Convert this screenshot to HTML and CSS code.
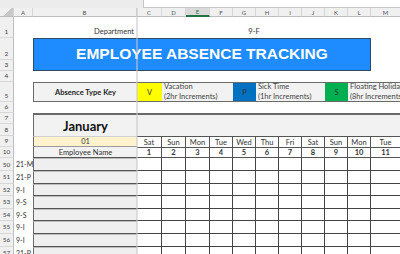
FILE: index.html
```html
<!DOCTYPE html>
<html lang="en">
<head>
    <meta charset="UTF-8">
    <title>Employee Absence Tracking</title>
    <link rel="stylesheet" href="styles.css">
</head>
<body>
    <div class="topbar"><div class="formula"></div></div>

    <div class="sheet">
        <!-- column headers -->
        <div class="colhdr corner"></div>
        <div class="colhdr">A</div>
        <div class="colhdr">B</div>
        <div class="colhdr">C</div>
        <div class="colhdr">D</div>
        <div class="colhdr sel">E</div>
        <div class="colhdr">F</div>
        <div class="colhdr">G</div>
        <div class="colhdr">H</div>
        <div class="colhdr">I</div>
        <div class="colhdr">J</div>
        <div class="colhdr">K</div>
        <div class="colhdr">L</div>
        <div class="colhdr">M</div>

        <!-- row 1 -->
        <div class="rh">1</div>
        <div></div>
        <div class="dept">Department</div>
        <div class="dept-val">9-F</div>
        <div></div>

        <!-- rows 2-3 -->
        <div class="rh">2</div>
        <div></div>
        <div class="banner">EMPLOYEE ABSENCE TRACKING</div>
        <div></div>
        <div class="rh">3</div>
        <div></div>
        <div></div>

        <!-- row 4 -->
        <div class="rh">4</div>
        <div class="blank-row"></div>

        <!-- row 5: key -->
        <div class="rh">5</div>
        <div></div>
        <div class="key key-title">Absence Type Key</div>
        <div class="key swatch vac">V</div>
        <div class="key key-text span3">Vacation<br>(2hr Increments)</div>
        <div class="key swatch sick">P</div>
        <div class="key key-text span3">Sick Time<br>(1hr Increments)</div>
        <div class="key swatch float">S</div>
        <div class="key key-text span2">Floating Holiday<br>(8hr Increments)</div>

        <!-- row 6 -->
        <div class="rh">6</div>
        <div class="blank-row"></div>

        <!-- rows 7-8 -->
        <div class="rh">7</div>
        <div></div>
        <div class="month">January</div>
        <div class="month-band"></div>
        <div class="rh">8</div>
        <div></div>

        <!-- row 9 -->
        <div class="rh">9</div>
        <div></div>
        <div class="month-no">01</div>
        <div class="day">Sat</div>
        <div class="day">Sun</div>
        <div class="day">Mon</div>
        <div class="day">Tue</div>
        <div class="day">Wed</div>
        <div class="day">Thu</div>
        <div class="day">Fri</div>
        <div class="day">Sat</div>
        <div class="day">Sun</div>
        <div class="day">Mon</div>
        <div class="day">Tue</div>

        <!-- row 10 -->
        <div class="rh">10</div>
        <div></div>
        <div class="name-hdr">Employee Name</div>
        <div class="day num">1</div>
        <div class="day num">2</div>
        <div class="day num">3</div>
        <div class="day num">4</div>
        <div class="day num">5</div>
        <div class="day num">6</div>
        <div class="day num">7</div>
        <div class="day num">8</div>
        <div class="day num">9</div>
        <div class="day num">10</div>
        <div class="day num">11</div>

        <!-- employee rows -->
        <div class="rh">50</div><div class="code">21-M</div><div class="emp"></div>
        <div class="g"></div><div class="g"></div><div class="g"></div><div class="g"></div><div class="g"></div><div class="g"></div><div class="g"></div><div class="g"></div><div class="g"></div><div class="g"></div><div class="g"></div>

        <div class="rh">51</div><div class="code">21-P</div><div class="emp"></div>
        <div class="g"></div><div class="g"></div><div class="g"></div><div class="g"></div><div class="g"></div><div class="g"></div><div class="g"></div><div class="g"></div><div class="g"></div><div class="g"></div><div class="g"></div>

        <div class="rh">52</div><div class="code">9-I</div><div class="emp"></div>
        <div class="g"></div><div class="g"></div><div class="g"></div><div class="g"></div><div class="g"></div><div class="g"></div><div class="g"></div><div class="g"></div><div class="g"></div><div class="g"></div><div class="g"></div>

        <div class="rh">53</div><div class="code">9-S</div><div class="emp"></div>
        <div class="g"></div><div class="g"></div><div class="g"></div><div class="g"></div><div class="g"></div><div class="g"></div><div class="g"></div><div class="g"></div><div class="g"></div><div class="g"></div><div class="g"></div>

        <div class="rh">54</div><div class="code">9-S</div><div class="emp"></div>
        <div class="g"></div><div class="g"></div><div class="g"></div><div class="g"></div><div class="g"></div><div class="g"></div><div class="g"></div><div class="g"></div><div class="g"></div><div class="g"></div><div class="g"></div>

        <div class="rh">55</div><div class="code">9-I</div><div class="emp"></div>
        <div class="g"></div><div class="g"></div><div class="g"></div><div class="g"></div><div class="g"></div><div class="g"></div><div class="g"></div><div class="g"></div><div class="g"></div><div class="g"></div><div class="g"></div>

        <div class="rh">56</div><div class="code">9-I</div><div class="emp"></div>
        <div class="g"></div><div class="g"></div><div class="g"></div><div class="g"></div><div class="g"></div><div class="g"></div><div class="g"></div><div class="g"></div><div class="g"></div><div class="g"></div><div class="g"></div>

        <div class="rh">57</div><div class="code">21-P</div><div class="emp"></div>
        <div class="g"></div><div class="g"></div><div class="g"></div><div class="g"></div><div class="g"></div><div class="g"></div><div class="g"></div><div class="g"></div><div class="g"></div><div class="g"></div><div class="g"></div>

        <!-- frozen pane divider -->
        <div class="freeze"></div>
    </div>
</body>
</html>
```

FILE: styles.css
```css
body {
    margin: 0;
    width: 400px;
    height: 254px;
    overflow: hidden;
    background-color: white;
    font-family: Lato, "Liberation Sans", sans-serif;
    font-size: 7.5px;
    color: #222;
}
.topbar {
    height: 8px;
    background-color: #ececec;
    display: flex;
}
.topbar .formula {
    margin-left: 143px;
    flex: 1;
    background-color: white;
    border-left: 1px solid #c6c6c6;
    border-bottom: 1px solid #c6c6c6;
}
.sheet {
    position: relative;
    display: grid;
    grid-template-columns: 14px 19px 104px 25px 24px 24px 23px 23px 23px 23px 23px 23px 23px 30px;
    grid-template-rows: 9px 21px 22px 11px 11px 20px 11px 11px 12px 11px 11px 13px repeat(7, 12.6px);
}
.sheet > div {
    box-sizing: border-box;
    min-width: 0;
}
.colhdr {
    background-color: #f0f0f0;
    border-right: 1px solid #d6d6d6;
    border-bottom: 1px solid #bdbdbd;
    color: #555;
    font-size: 6px;
    display: flex;
    align-items: center;
    justify-content: center;
}
.colhdr.sel {
    background-color: #dadada;
    color: #217346;
    border-bottom: 2px solid #217346;
}
.corner {
    background: linear-gradient(135deg, #f0f0f0 55%, #c8c8c8 55%);
}
.rh {
    background-color: #f0f0f0;
    border-right: 1px solid #bdbdbd;
    border-bottom: 1px solid #d8d8d8;
    color: #444;
    font-size: 6.5px;
    display: flex;
    align-items: flex-end;
    justify-content: center;
    line-height: 1;
    padding-bottom: 2px;
}
.dept {
    display: flex;
    align-items: flex-end;
    justify-content: flex-end;
    padding: 0 3px 2px 0;
    color: #333;
}
.dept-val {
    grid-column: span 10;
    display: flex;
    align-items: flex-end;
    justify-content: center;
    padding-bottom: 2px;
    color: #333;
}
.banner {
    grid-column: span 11;
    grid-row: span 2;
    background-color: #1e8bff;
    border: 1px solid #2d4a66;
    color: white;
    font-family: "Liberation Sans", Arial, sans-serif;
    font-weight: bold;
    font-size: 15.5px;
    display: flex;
    align-items: center;
    justify-content: center;
    padding-bottom: 2px;
}
.blank-row {
    grid-column: span 13;
}
.key {
    border-top: 1px solid #6a6a6a;
    border-bottom: 1px solid #6a6a6a;
    display: flex;
    align-items: center;
}
.key-title {
    border-left: 1px solid #6a6a6a;
    background-color: #f2f2f2;
    font-weight: bold;
    justify-content: center;
}
.swatch {
    justify-content: center;
    color: #333;
}
.vac {
    background-color: #ffff00;
}
.sick {
    background-color: #0070c0;
}
.float {
    background-color: #00b050;
}
.key-text {
    background-color: #f2f2f2;
    color: #444;
    line-height: 1.3;
    padding-left: 2px;
    white-space: nowrap;
    overflow: hidden;
}
.span3 {
    grid-column: span 3;
}
.span2 {
    grid-column: span 2;
}
.month {
    grid-row: span 2;
    background-color: #f2f2f2;
    border-top: 2px solid #6a6a6a;
    border-left: 1px solid #6a6a6a;
    font-weight: bold;
    font-size: 13px;
    color: #111;
    display: flex;
    align-items: center;
    justify-content: center;
}
.month-band {
    grid-column: span 11;
    grid-row: span 2;
    background-color: #f2f2f2;
    border-top: 2px solid #6a6a6a;
}
.month-no {
    background-color: #fff2cc;
    border-left: 1px solid #6a6a6a;
    border-top: 1px solid #cfcfcf;
    border-bottom: 1px solid #9a9a9a;
    display: flex;
    align-items: center;
    justify-content: center;
    color: #333;
}
.name-hdr {
    background-color: #f2f2f2;
    border-left: 1px solid #6a6a6a;
    border-bottom: 1px solid #555;
    display: flex;
    align-items: center;
    justify-content: center;
    color: #333;
}
.day {
    border-top: 1px solid #555;
    border-right: 1px solid #555;
    display: flex;
    align-items: center;
    justify-content: center;
    color: #333;
}
.day.num {
    font-weight: bold;
    border-bottom: 1px solid #555;
}
.code {
    font-size: 7px;
    color: #333;
    padding: 2px 0 0 2px;
    white-space: nowrap;
    position: relative;
    z-index: 1;
}
.emp {
    background-color: #efefef;
    border-left: 1px solid #6a6a6a;
    border-bottom: 1px solid #555;
    border-top: 1px solid #bdbdbd;
}
.g {
    border-right: 1px solid #444;
    border-bottom: 1px solid #444;
}
.freeze {
    position: absolute;
    left: 136px;
    top: 0;
    bottom: 0;
    width: 2px;
    background-color: rgba(200, 200, 200, 0.55);
}
```
